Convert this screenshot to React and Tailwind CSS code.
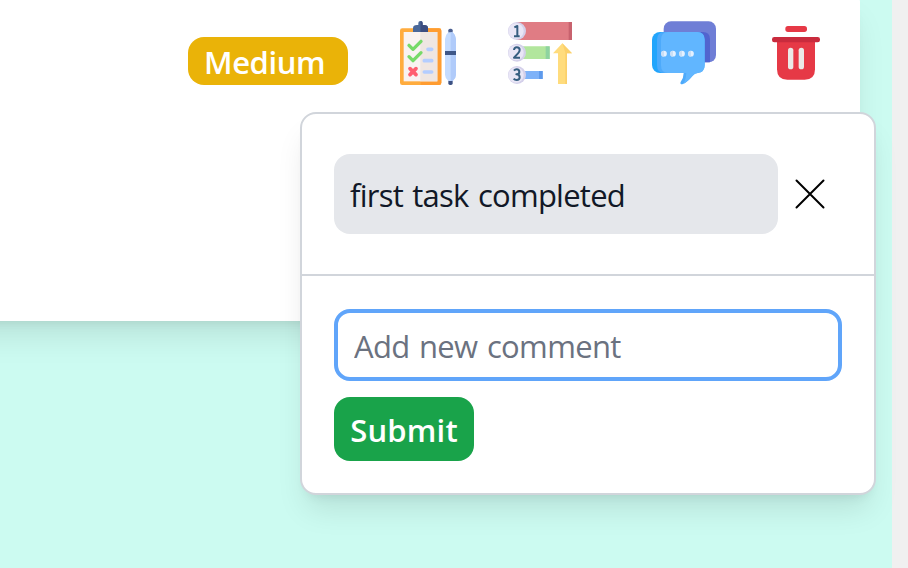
import React from "react";

function TaskIcon() {
  return (
    <svg viewBox="0 0 240 240" className="size-20 shrink-0">
      <rect x="30" y="49" width="124" height="170" rx="7" fill="#ffac3e" />
      <path d="M92 49h55q7 0 7 7v156q0 7-7 7H92z" fill="#ff9c30" />
      <rect x="41" y="60" width="101" height="148" fill="#f9f3f1" />
      <path d="M91 60h51v148H91z" fill="#efe6e2" />
      <path d="M69 60V49q0-10 12-10h4V33q0-6 6.500-6t6.500 6v6h4q12 0 12 10v11z" fill="#4a6899" />
      <path d="M91.500 27q6.500 0 6.500 6v6h4q12 0 12 10v11H91.500z" fill="#3c4d80" />
      <g fill="none" strokeLinecap="round" strokeLinejoin="round">
        <path d="M57 100l12 12 24-24M57 134l12 12 24-24" stroke="#77da68" strokeWidth="10" />
        <path d="M60 170l18 18M78 170l-18 18" stroke="#ff5f70" strokeWidth="11" />
        <path d="M114 112h11M103 146h22M103 180h22" stroke="#b4cdff" strokeWidth="11" />
      </g>
      <rect x="175" y="50" width="13" height="25" rx="5" fill="#4a5f91" />
      <rect x="175" y="198" width="13" height="21" rx="5" fill="#3c5183" />
      <path d="M175 61h13q10 9 10 20v107q0 10-10 19h-13q-10-9-10-19V81q0-11 10-20z" fill="#c5dcff" />
      <path d="M182 61h6q10 9 10 20v107q0 10-10 19h-6z" fill="#b0cbfa" />
      <path d="M165 117h33v12h-33z" fill="#3e5788" />
    </svg>
  );
}

function PriorityIcon() {
  return (
    <svg viewBox="0 0 240 240" className="size-20 shrink-0">
      <path d="M50 30h166v54H50z" fill="#e07c84" />
      <path d="M206 30h10v54h-10z" fill="#c8626e" />
      <path d="M50 103h99v38H50z" fill="#b2e69d" />
      <path d="M137 103h12v38h-12z" fill="#8ed3a0" />
      <path d="M50 177h78v24H50z" fill="#7eb2f8" />
      <path d="M117 177h11v24h-11z" fill="#5e9aec" />
      <path d="M187 94l29 30h-15v92h-27v-92h-15z" fill="#ffdc7d" />
      <path d="M187 94l29 30h-15v92h-5v-94z" fill="#fbd06b" />
      <g fill="#d4d0ea">
        <circle cx="51" cy="57" r="27" />
        <circle cx="51" cy="122" r="27" />
        <circle cx="51" cy="189" r="27" />
      </g>
      <g fill="#e9e6f6">
        <circle cx="48" cy="57" r="23" />
        <circle cx="48" cy="122" r="23" />
        <circle cx="48" cy="189" r="23" />
      </g>
      <g fill="none" stroke="#365e80" strokeWidth="6" strokeLinejoin="round">
        <path d="M43 46l9-4v31M42 73h17" />
        <path d="M42 114q1-8 8-8 9 0 9 8 0 5-5 10L42 137h18" />
        <path d="M42 176q3-4 8-4 8 0 8 8 0 7-9 7 10 0 10 9 0 8-9 8-6 0-9-4" />
      </g>
    </svg>
  );
}

function CommentsIcon() {
  return (
    <svg viewBox="0 0 240 240" className="size-20 shrink-0">
      <rect x="59" y="28" width="157" height="123" rx="22" fill="#6f7ed6" />
      <path d="M150 60h26q22 0 22 22v69h-48z" fill="#5164cf" />
      <rect x="24" y="60" width="60" height="123" rx="24" fill="#22a5fc" />
      <path d="M61 60h98q23 0 23 23v77q0 21-21 23-9 1-15 8-14 18-31 26-8 0-5-7 9-13 9-27H60q-21 0-21-23V83q0-23 22-23z" fill="#4daafb" />
      <path d="M72 60h87q23 0 23 23v77q0 21-21 23-9 1-15 8-13 16-27 24 8-15 8-32H72q-21 0-21-23V83q0-23 21-23z" fill="#61b6ff" />
      <g fill="#e5f1ff">
        <circle cx="60" cy="125" r="8.500" />
        <circle cx="87" cy="125" r="8.500" />
        <circle cx="114" cy="125" r="8.500" />
        <circle cx="141" cy="125" r="8.500" />
      </g>
      <path d="M60 116.500a8.500 8.500 0 0 0 0 17zM87 116.500a8.500 8.500 0 0 0 0 17zM114 116.500a8.500 8.500 0 0 0 0 17zM141 116.500a8.500 8.500 0 0 0 0 17z" fill="#cbdff5" />
    </svg>
  );
}

function TrashIcon() {
  return (
    <svg viewBox="0 0 240 240" className="size-20 shrink-0">
      <rect x="64" y="42" width="65" height="18" rx="8" fill="#e63946" />
      <path d="M39 84h114v88q0 31-31 31H70q-31 0-31-31z" fill="#e63946" />
      <rect x="24" y="75" width="144" height="16" rx="7" fill="#c92b3d" />
      <rect x="72" y="107" width="16" height="65" rx="8" fill="#ebe9e7" />
      <rect x="104" y="107" width="16" height="65" rx="8" fill="#ebe9e7" />
    </svg>
  );
}

function CommentPopover() {
  return (
    <section className="absolute top-[112px] left-[300px] h-[383px] w-[576px] rounded-[16px] border-2 border-[#d1d5db] bg-white shadow-[0_20px_30px_-6px_rgba(0,0,0,0.1),0_8px_12px_-8px_rgba(0,0,0,0.1)]">
      <div className="flex h-[162px] items-start border-b-2 border-[#d1d5db] px-8 pt-10">
        <p className="h-20 w-[444px] rounded-[16px] bg-[#e5e7eb] pl-4 text-[31px] leading-[83px] tracking-[-0.75px] whitespace-nowrap text-[#111827] [word-spacing:2px]">
          first task completed
        </p>
        <button aria-label="Delete comment" className="mt-6 ml-4">
          <svg viewBox="0 0 32 32" className="size-8" fill="none" stroke="#000" strokeWidth="2" strokeLinecap="round">
            <path d="M2.500 2.500l27 27M29.500 2.500l-27 27" />
          </svg>
        </button>
      </div>
      <form className="flex flex-col items-start gap-4 px-8 pt-[33px]">
        <input
          placeholder="Add new comment"
          className="h-[72px] w-[508px] rounded-[16px] border-4 border-[#60a5fa] px-4 pt-px text-[31px] tracking-[-0.65px] outline-none [word-spacing:2px] placeholder:text-[#6b7280]"
        />
        <button type="button" className="h-16 w-[140px] rounded-[16px] bg-[#19a34a] pt-[3px] text-[31px] font-semibold tracking-[0.2px] text-white">
          Submit
        </button>
      </form>
    </section>
  );
}

export default function App() {
  return (
    <main className="relative flex h-[568px] w-[908px] overflow-hidden bg-[#ccfbf1] font-['Open_Sans','Noto_Sans',sans-serif]">
      <div className="flex-1">
        <article className="-mt-1 -ml-20 h-[325px] w-[940px] rounded-r-[6px] bg-white shadow-[0_20px_30px_-6px_rgba(0,0,0,0.1),0_8px_12px_-8px_rgba(0,0,0,0.1)]">
          <header className="flex items-start pt-4 pl-[268px]">
            <span className="mt-[25px] mr-[42px] h-12 w-40 rounded-[16px] bg-[#eab308] pl-4 text-[31px] leading-[51px] font-semibold tracking-[-0.4px] text-white">
              Medium
            </span>
            <TaskIcon />
            <div className="ml-[30px] flex">
              <PriorityIcon />
            </div>
            <div className="ml-16 flex gap-10">
              <CommentsIcon />
              <TrashIcon />
            </div>
          </header>
        </article>
      </div>
      <aside className="w-4 bg-[#f0f0f0]" />
      <CommentPopover />
    </main>
  );
}
